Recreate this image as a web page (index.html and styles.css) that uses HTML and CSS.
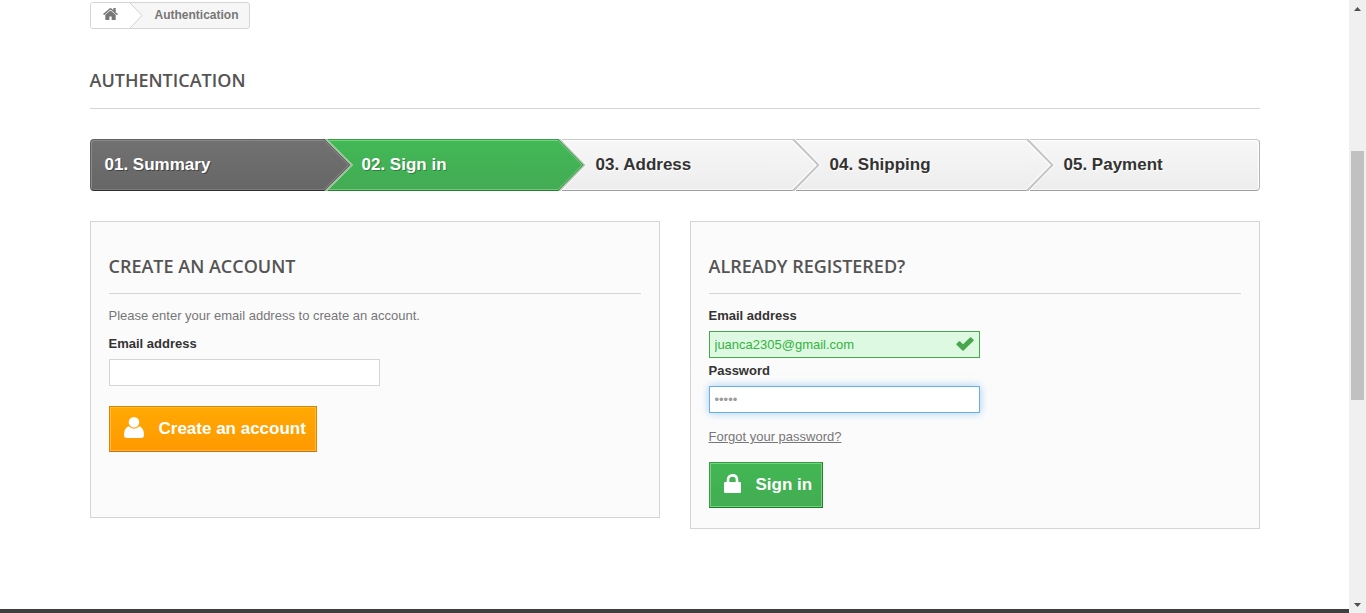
FILE: index.html
```html
<!DOCTYPE html>
<html lang="en">
<head>
<meta charset="utf-8">
<title>Authentication</title>
<link rel="stylesheet" href="styles.css">
</head>
<body>
<div class="window">
  <div class="page">
    <main class="container">
      <nav class="breadcrumb" aria-label="Breadcrumb">
        <a class="breadcrumb-home" href="#" aria-label="Home">
          <svg width="15" height="12" viewBox="64 253 1664 1283" preserveAspectRatio="none" fill="currentColor" aria-hidden="true"><path d="M1472 992v480q0 26-19 45t-45 19h-384v-384h-256v384h-384q-26 0-45-19t-19-45v-480q0-1 .5-3t.5-3l575-474 575 474q1 2 1 6zm223-69l-62 74q-8 9-21 11h-3q-13 0-21-7l-692-577-692 577q-12 8-24 7-13-2-21-11l-62-74q-8-10-7-23.5t11-21.5l719-599q32-26 76-26t76 26l244 204v-195q0-14 9-23t23-9h192q14 0 23 9t9 23v408l219 182q10 8 11 21.5t-7 23.5z"/></svg>
        </a>
        <svg class="breadcrumb-arrow" width="13" height="25" viewBox="0 0 13 25" aria-hidden="true"><path d="M0 0L12 12.500L0 25Z" fill="#fff"/><path d="M0 0L12 12.500L0 25" fill="none" stroke="#d0d0d0"/></svg>
        <span class="breadcrumb-current">Authentication</span>
      </nav>

      <h1 class="page-heading">Authentication</h1>

      <svg class="defs" width="0" height="0" aria-hidden="true">
        <defs>
          <linearGradient id="dark" x1="0" y1="0" x2="0" y2="1"><stop offset="0" stop-color="#727171"/><stop offset="1" stop-color="#666"/></linearGradient>
          <linearGradient id="green" x1="0" y1="0" x2="0" y2="1"><stop offset="0" stop-color="#42b856"/><stop offset="1" stop-color="#43ab54"/></linearGradient>
          <linearGradient id="light" x1="0" y1="0" x2="0" y2="1"><stop offset="0" stop-color="#f7f7f7"/><stop offset="1" stop-color="#ededed"/></linearGradient>
        </defs>
      </svg>
      <ol class="steps">
        <li class="step step-done"><a href="#">01. Summary</a>
          <svg class="step-arrow" width="30" height="52" viewBox="0 0 30 52" fill="none" aria-hidden="true"><path d="M-1 1H1L26 26L1 51H-1Z" fill="url(#dark)"/><path d="M-1 1.500H0L24.500 26L0 50.500H-1" stroke="#8a8989"/><path d="M0 0L26 26L0 52" stroke="#555"/><path d="M1.500 0L27.500 26L1.500 52" stroke="#b5c0b5" stroke-width="1.500"/><path d="M3 0L29 26L3 52" stroke="#74d578"/></svg>
        </li>
        <li class="step step-current" aria-current="step"><span>02. Sign in</span>
          <svg class="step-arrow" width="30" height="52" viewBox="0 0 30 52" fill="none" aria-hidden="true"><path d="M-1 1H1L26 26L1 51H-1Z" fill="url(#green)"/><path d="M-1 1.500H0L24 26L0 50.500H-1" stroke="#74c776"/><path d="M0 0L25.500 26L0 52" stroke="#3a9c4a"/><path d="M1.500 0L27 26L1.500 52" stroke="#c9c9c9" stroke-width="1.500"/><path d="M3 0L28.500 26L3 52" stroke="#fff"/></svg>
        </li>
        <li class="step"><span>03. Address</span>
          <svg class="step-arrow" width="30" height="52" viewBox="0 0 30 52" fill="none" aria-hidden="true"><path d="M-1 1H1L26 26L1 51H-1Z" fill="url(#light)"/><path d="M0 2L24 26L0 50" stroke="#fff"/><path d="M1 0L26.500 26L1 52" stroke="#c4c4c4" stroke-width="2"/><path d="M3 0L28.500 26L3 52" stroke="#fff"/></svg>
        </li>
        <li class="step"><span>04. Shipping</span>
          <svg class="step-arrow" width="30" height="52" viewBox="0 0 30 52" fill="none" aria-hidden="true"><path d="M-1 1H1L26 26L1 51H-1Z" fill="url(#light)"/><path d="M0 2L24 26L0 50" stroke="#fff"/><path d="M1 0L26.500 26L1 52" stroke="#c4c4c4" stroke-width="2"/><path d="M3 0L28.500 26L3 52" stroke="#fff"/></svg>
        </li>
        <li class="step"><span>05. Payment</span></li>
      </ol>

      <div class="columns">
        <form class="box">
          <h3 class="box-heading">Create an account</h3>
          <p class="intro">Please enter your email address to create an account.</p>
          <div class="field">
            <label for="email-create">Email address</label>
            <input class="text-input" id="email-create" type="email">
          </div>
          <button class="button button-orange" type="button">
            <svg width="20" height="21" viewBox="0 0 20 21" aria-hidden="true"><path d="M4.500 9.300Q10 14.200 15.500 9.300Q20 11.500 20 18Q20 21 17 21H3Q0 21 0 18Q0 11.500 4.500 9.300Z" fill="#fff"/><ellipse cx="10" cy="5.300" rx="5.800" ry="5.900" fill="#ffa502"/><ellipse cx="10" cy="5.300" rx="5.300" ry="5.300" fill="#fff"/></svg>
            <span>Create an account</span>
          </button>
        </form>

        <form class="box">
          <h3 class="box-heading">Already registered?</h3>
          <div class="field">
            <label for="email">Email address</label>
            <div class="input-wrap">
              <input class="text-input text-input-valid" id="email" type="email" value="juanca2305@gmail.com">
              <svg class="check" width="18" height="14" viewBox="0 0 18 14" aria-hidden="true"><path d="M.5 6.800L3 4.300Q3.500 4 4 4.300L7 7.300L14 .4Q14.700 0 15.200 .5L17.600 2.700Q18 3.200 17.600 3.700L7.600 13.500Q7 14 6.400 13.500L.5 7.800Q0 7.300 .5 6.800Z" fill="#46a74e"/></svg>
            </div>
          </div>
          <div class="field">
            <label for="password">Password</label>
            <input class="text-input text-input-focus" id="password" type="password" value="abcde">
          </div>
          <p class="forgot"><a href="#">Forgot your password?</a></p>
          <button class="button button-green" type="button">
            <svg width="17" height="19" viewBox="0 0 17 19" aria-hidden="true"><rect y="8" width="17" height="11" rx="1.200" fill="currentColor"/><path d="M4 9V6Q4 1.400 8.500 1.400T13 6V9" fill="none" stroke="currentColor" stroke-width="2.600"/></svg>
            <span>Sign in</span>
          </button>
        </form>
      </div>
    </main>
    <footer class="footer"></footer>
  </div>
  <div class="scrollbar" aria-hidden="true">
    <svg class="scroll-arrow" width="7" height="4" viewBox="0 0 7 4"><path d="M3.500 0L7 4H0Z" fill="#505050"/></svg>
    <div class="scroll-thumb"></div>
    <svg class="scroll-arrow scroll-down" width="7" height="4" viewBox="0 0 7 4"><path d="M0 0H7L3.500 4Z" fill="#505050"/></svg>
  </div>
</div>
</body>
</html>
```

FILE: styles.css
```css
* {
  box-sizing: border-box;
}

body {
  margin: 0;
  background: #fff;
  color: #777;
  font: 13px/18px "Liberation Sans", Arial, sans-serif;
}

.window {
  display: grid;
  grid-template-columns: 1fr 17px;
  min-height: 100vh;
}

.page {
  display: flex;
  flex-direction: column;
  min-width: 0;
}

.container {
  width: 100%;
  max-width: 1170px;
  margin: 0 auto;
  padding-top: 2px;
}

.defs {
  display: block;
}

.breadcrumb {
  display: inline-flex;
  vertical-align: top;
  height: 27px;
  border: 1px solid #d6d4d4;
  border-radius: 3px;
  background: #f6f6f6;
  overflow: hidden;
  font-size: 12px;
  font-weight: bold;
  line-height: 24px;
}

.breadcrumb-home {
  width: 39px;
  padding: 5px 0 0 12px;
  background: #fff;
  color: #777;
  line-height: 0;
}

.breadcrumb-current {
  padding: 0 10px 0 12px;
}

.page-heading,
.box-heading {
  border-bottom: 1px solid #d6d4d4;
  color: #555454;
  font-family: "Open Sans", sans-serif;
  font-size: 18px;
  font-weight: 600;
  text-transform: uppercase;
}

.page-heading {
  margin: 40px 0 30px;
  padding-bottom: 17px;
  line-height: 22px;
}

.steps {
  display: grid;
  grid-template-columns: repeat(5, 1fr);
  margin: 0 0 30px;
  padding: 0;
  list-style: none;
}

.step {
  position: relative;
  height: 52px;
  padding: 14px 0 0 38px;
  border: 0 solid #c9c9c9;
  border-top-width: 1px;
  border-bottom: 1px solid #9f9f9f;
  background: linear-gradient(#f7f7f7, #ededed);
  box-shadow: inset 0 1px #fff, inset 0 -1px #f8f8f8;
  color: #333;
  font-size: 17px;
  font-weight: bold;
  line-height: 22px;
  text-shadow: 1px 1px #fff;
}

.step a {
  color: inherit;
  text-decoration: none;
}

.step:first-child {
  padding-left: 14px;
  border-left-width: 1px;
  border-radius: 4px 0 0 4px;
}

.step:last-child {
  border-right: 1px solid #b4b4b4;
  border-radius: 0 4px 4px 0;
  box-shadow: inset -1px 1px #fff, inset 0 -1px #f8f8f8;
}

.step-done {
  border-color: #606060 #606060 #2e2e2e;
  background: linear-gradient(#727171, #666);
  box-shadow: inset 1px 1px #8a8989, inset 0 -1px #7c7b7b;
  color: #fff;
  text-shadow: 1px 1px rgba(0, 0, 0, .4);
}

.step-current {
  border-color: #399a49 #399a49 #247f32;
  background: linear-gradient(#42b856, #43ab54);
  box-shadow: inset 0 1px #74d578, inset 0 -1px #74c776;
  color: #fff;
  text-shadow: 1px 1px rgba(0, 0, 0, .3);
}

.step-arrow {
  position: absolute;
  top: -1px;
  left: 100%;
  z-index: 1;
}

.columns {
  display: grid;
  grid-template-columns: 1fr 1fr;
  align-items: start;
  gap: 30px;
}

.box {
  min-height: 297px;
  padding: 14px 18px 20px;
  border: 1px solid #d6d4d4;
  background: #fbfbfb;
}

.box-heading {
  margin: 18px 0 13px;
  padding-bottom: 14px;
  line-height: 25px;
}

.intro {
  margin: 0 0 10px;
}

.field {
  display: flex;
  flex-direction: column;
  gap: 6px;
  max-width: 271px;
  margin-bottom: 4px;
  color: #333;
  font-weight: bold;
}

.input-wrap {
  position: relative;
  display: flex;
}

.text-input {
  width: 100%;
  height: 27px;
  padding: 0 5px;
  border: 1px solid #d6d4d4;
  border-radius: 0;
  outline: 0;
  background: #fff;
  color: #9c9b9b;
  font: 13px "Liberation Sans", Arial, sans-serif;
}

.text-input-valid {
  padding-right: 30px;
  border-color: #46a74e;
  background: #ddf9e1;
  color: #35b33f;
}

.text-input-focus {
  border-color: #66afe9;
  box-shadow: 0 0 8px rgba(102, 175, 233, .6);
}

.check {
  position: absolute;
  top: 6px;
  right: 6px;
}

.forgot {
  margin: 15px 0 16px;
}

.forgot a {
  color: #777;
}

.button {
  display: flex;
  align-items: center;
  gap: 15px;
  height: 46px;
  padding: 0 10px 2px 14px;
  border: 1px solid;
  border-radius: 0;
  font: bold 17px/21px "Liberation Sans", Arial, sans-serif;
}

.button svg {
  margin-bottom: 2px;
}

.button-orange {
  margin-top: 20px;
  border-color: #d88604 #d88604 #cc6f14;
  background: linear-gradient(#ffa902, #ff9902);
  box-shadow: inset 0 0 0 1px #ffb934;
  color: #fff;
}

.button-green {
  border-color: #399a49 #247f32 #1a7a29 #399a49;
  background: linear-gradient(#43b754, #42ac52);
  box-shadow: inset 0 0 0 1px #74d578;
  color: #fff;
}

.footer {
  height: 4px;
  margin-top: 80px;
  background: #3f3f3f;
}

.scrollbar {
  display: grid;
  grid-template-rows: 17px 134fr 249fr 196fr 17px;
  justify-items: center;
  background: #f0f0f0;
}

.scroll-arrow {
  grid-row: 1;
  align-self: center;
}

.scroll-thumb {
  grid-row: 3;
  width: 13px;
  background: #c1c1c1;
}

.scroll-down {
  grid-row: 5;
}
```
